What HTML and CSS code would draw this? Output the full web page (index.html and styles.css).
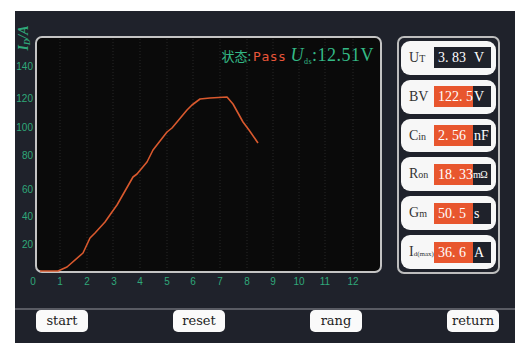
FILE: index.html
```html
<!DOCTYPE html>
<html>
<head>
    <meta charset="UTF-8">
    <meta name="viewport" content="width=device-width, initial-scale=1.0">
    <title>测试</title>
    <link rel="stylesheet" href="styles.css">
</head>
<body>
    <div class="screen">
        <div class="main">
            <!-- 曲线 -->
            <div class="plot">
                <svg class="chart" width="367" height="297" viewBox="0 0 367 297">
                    <text class="ytitle" transform="translate(13 27) rotate(-90)" text-anchor="middle">I<tspan class="sub" dy="2">D</tspan><tspan dy="-2">/A</tspan></text>
                    <rect class="frame" x="21" y="26" width="345" height="235" rx="6"></rect>
                    <g class="grid">
                        <line x1="45" y1="28" x2="45" y2="259"></line>
                        <line x1="72" y1="28" x2="72" y2="259"></line>
                        <line x1="98" y1="28" x2="98" y2="259"></line>
                        <line x1="125" y1="28" x2="125" y2="259"></line>
                        <line x1="152" y1="28" x2="152" y2="259"></line>
                        <line x1="178" y1="28" x2="178" y2="259"></line>
                        <line x1="205" y1="28" x2="205" y2="259"></line>
                        <line x1="232" y1="28" x2="232" y2="259"></line>
                        <line x1="258" y1="28" x2="258" y2="259"></line>
                        <line x1="284" y1="28" x2="284" y2="259"></line>
                        <line x1="310" y1="28" x2="310" y2="259"></line>
                        <line x1="338" y1="28" x2="338" y2="259"></line>
                    </g>
                    <g class="axis" text-anchor="end">
                        <text x="18" y="59">140</text>
                        <text x="18" y="91">120</text>
                        <text x="18" y="120">100</text>
                        <text x="18" y="148">80</text>
                        <text x="18" y="182">60</text>
                        <text x="18" y="209">40</text>
                        <text x="18" y="237">20</text>
                    </g>
                    <g class="axis" text-anchor="middle">
                        <text x="18" y="274">0</text>
                        <text x="45" y="274">1</text>
                        <text x="72" y="274">2</text>
                        <text x="99" y="274">3</text>
                        <text x="125" y="274">4</text>
                        <text x="152" y="274">5</text>
                        <text x="178" y="274">6</text>
                        <text x="205" y="274">7</text>
                        <text x="232" y="274">8</text>
                        <text x="258" y="274">9</text>
                        <text x="284" y="274">10</text>
                        <text x="310" y="274">11</text>
                        <text x="338" y="274">12</text>
                    </g>
                    <polyline class="curve" points="25,260 43,260 52,256 68,242 75,227 80,222 90,211 97,201 102,194 118,166 122,163 132,151 138,139 152,121 157,117 172,99 177,94 185,88 195,87 212,86 218,93 228,111 234,119 243,132"></polyline>
                </svg>
                <div class="status">
                    <span class="cn">状态:</span><span class="pass">Pass</span>
                    <span class="uds"><i>U</i><sub>ds</sub>:12.51V</span>
                </div>
            </div>
            <!-- 参数 -->
            <div class="panel">
                <div class="item">
                    <div class="name">U<small>T</small></div>
                    <div class="value dark"><span class="num">3. 83</span><span class="unit">V</span></div>
                </div>
                <div class="item">
                    <div class="name">BV</div>
                    <div class="value"><span class="num">122. 5</span><span class="unit">V</span></div>
                </div>
                <div class="item">
                    <div class="name">C<small>in</small></div>
                    <div class="value"><span class="num">2. 56</span><span class="unit">nF</span></div>
                </div>
                <div class="item">
                    <div class="name">R<small>on</small></div>
                    <div class="value"><span class="num">18. 33</span><span class="unit small">mΩ</span></div>
                </div>
                <div class="item">
                    <div class="name">G<small>m</small></div>
                    <div class="value"><span class="num">50. 5</span><span class="unit">s</span></div>
                </div>
                <div class="item">
                    <div class="name">I<small class="tiny">d(max)</small></div>
                    <div class="value"><span class="num">36. 6</span><span class="unit">A</span></div>
                </div>
            </div>
        </div>
        <div class="divider"></div>
        <!-- 按钮 -->
        <div class="buttons">
            <div class="btn">start</div>
            <div class="btn">reset</div>
            <div class="btn">rang</div>
            <div class="btn">return</div>
        </div>
    </div>
</body>
</html>
```

FILE: styles.css
```css
body {
    margin: 0;
    background-color: #FFF;
}

.screen {
    display: flex;
    flex-direction: column;
    width: 500px;
    height: 332px;
    margin: 11px 0 0 15px;
    background-color: #1F222B;
}

.main {
    display: flex;
    height: 297px;
}

/* 曲线 */

.plot {
    position: relative;
    width: 367px;
}

.chart {
    display: block;
}

.chart .frame {
    fill: #0A0A0A;
    stroke: #C4C4C4;
    stroke-width: 2;
}

.chart .grid line {
    stroke: #262626;
    stroke-width: 1;
    stroke-dasharray: 1 2;
}

.chart .axis text {
    fill: #2FA87A;
    font-family: "Liberation Sans", sans-serif;
    font-size: 10px;
}

.chart .ytitle {
    fill: #2FA87A;
    font-family: "Liberation Serif", serif;
    font-size: 14px;
    font-style: italic;
    font-weight: bold;
}

.chart .ytitle .sub {
    font-size: 9px;
}

.chart .curve {
    fill: none;
    stroke: #D9592E;
    stroke-width: 1.6;
    stroke-linejoin: round;
}

.status {
    position: absolute;
    top: 34px;
    right: 8px;
    display: flex;
    align-items: baseline;
    white-space: nowrap;
}

.status .cn {
    color: #34B986;
    font-family: "Noto Sans CJK SC", sans-serif;
    font-size: 13px;
}

.status .pass {
    margin-left: 2px;
    color: #E8563A;
    font-family: "DejaVu Sans Mono", monospace;
    font-size: 13px;
    letter-spacing: 0.5px;
}

.status .uds {
    margin-left: 4px;
    color: #34B986;
    font-family: "Liberation Serif", serif;
    font-size: 18px;
    letter-spacing: 0.5px;
}

.status .uds sub {
    font-size: 8px;
    vertical-align: -3px;
}

/* 参数 */

.panel {
    display: flex;
    flex-direction: column;
    gap: 5px;
    box-sizing: border-box;
    width: 103px;
    height: 238px;
    margin: 25px 0 0 15px;
    padding: 3px 2px;
    border: 2px solid #BDBDBD;
    border-radius: 7px;
}

.item {
    display: flex;
    align-items: center;
    height: 34px;
    padding-right: 5px;
    border-radius: 9px;
    background-color: #F7F7F7;
}

.item .name {
    width: 33px;
    padding-left: 8px;
    box-sizing: border-box;
    color: #333;
    font-family: "Liberation Serif", serif;
    font-size: 14px;
    white-space: nowrap;
}

.item .name small {
    font-size: 10px;
}

.item .name small.tiny {
    font-size: 7px;
}

.value {
    display: flex;
    height: 21px;
    color: #FFF;
    font-family: "Liberation Serif", serif;
    line-height: 21px;
}

.value .num {
    width: 39px;
    padding-left: 4px;
    box-sizing: border-box;
    background-color: #E8562E;
    font-size: 14px;
    white-space: nowrap;
}

.value .unit {
    width: 18px;
    padding-left: 1px;
    box-sizing: border-box;
    background-color: #1F222B;
    font-size: 14px;
    white-space: nowrap;
    overflow: hidden;
}

.value .unit.small {
    padding-left: 0;
    font-size: 10px;
    letter-spacing: -0.5px;
}

.value.dark .num {
    background-color: #1F222B;
}

.divider {
    height: 2px;
    background-color: #595B63;
}

/* 按钮 */

.buttons {
    display: flex;
    justify-content: space-between;
    padding: 0 16px 0 21px;
}

.btn {
    width: 52px;
    height: 22px;
    border-radius: 5px;
    background-color: #FAFAFA;
    color: #222;
    font-family: "DejaVu Serif", serif;
    font-size: 13px;
    line-height: 21px;
    text-align: center;
}
```
